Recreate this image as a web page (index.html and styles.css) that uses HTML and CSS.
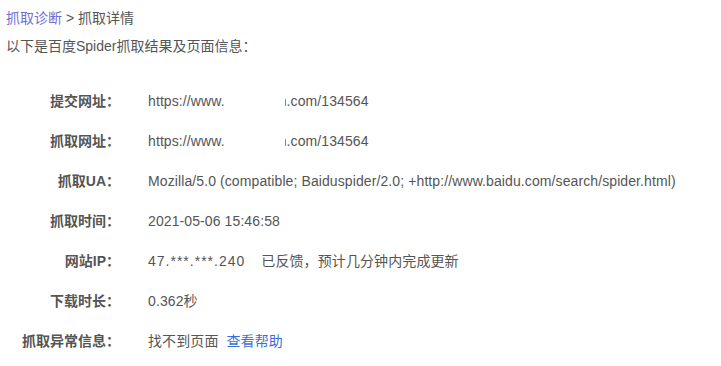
FILE: index.html
```html
<!DOCTYPE html>
<html lang="zh-CN">
<head>
<meta charset="utf-8">
<link rel="stylesheet" href="styles.css">
</head>
<body>
<div class="page">
  <div class="crumb"><a class="crumb-link">抓取诊断</a> &gt; 抓取详情</div>
  <div class="intro">以下是百度Spider抓取结果及页面信息：</div>
  <div class="rows">
    <div class="row"><div class="label">提交网址：</div><div class="value">https://www.<span class="mask"></span>n.com/134564</div></div>
    <div class="row"><div class="label">抓取网址：</div><div class="value">https://www.<span class="mask"></span>n.com/134564</div></div>
    <div class="row"><div class="label">抓取UA：</div><div class="value">Mozilla/5.0 (compatible; Baiduspider/2.0; +http://www.baidu.com/search/spider.html)</div></div>
    <div class="row"><div class="label">抓取时间：</div><div class="value">2021-05-06 15:46:58</div></div>
    <div class="row"><div class="label">网站IP：</div><div class="value"><span class="ip">47.***.***.240</span><span class="gap"></span>已反馈，预计几分钟内完成更新</div></div>
    <div class="row"><div class="label">下载时长：</div><div class="value">0.362秒</div></div>
    <div class="row"><div class="label">抓取异常信息：</div><div class="value">找不到页面 <a class="help-link">查看帮助</a></div></div>
  </div>
</div>
</body>
</html>
```
FILE: styles.css
```css
html, body { margin: 0; background: #fff; }
body {
  font-family: "Liberation Sans", "Noto Sans CJK SC", sans-serif;
  font-size: 14px;
  color: #555;
}
.page { padding: 8px 6px 0 6px; }
.crumb { line-height: 20px; color: #555; }
.crumb-link { color: #6a70d6; text-decoration: none; }
.help-link { color: #3b6fd8; text-decoration: none; margin-left: 4px; }
.intro { margin-top: 8px; line-height: 20px; }
.rows { margin-top: 35px; display: flex; flex-direction: column; gap: 20px; }
.row { display: flex; line-height: 20px; }
.label { width: 114px; text-align: right; font-weight: bold; color: #555; flex: none; }
.value { margin-left: 28px; white-space: nowrap; letter-spacing: 0.1px; }
.ip { letter-spacing: 1px; }
.mask { display: inline-block; width: 60px; height: 20px; vertical-align: top; background: #fff; margin-right: -6px; position: relative; }
.gap { display: inline-block; width: 16px; }
```
